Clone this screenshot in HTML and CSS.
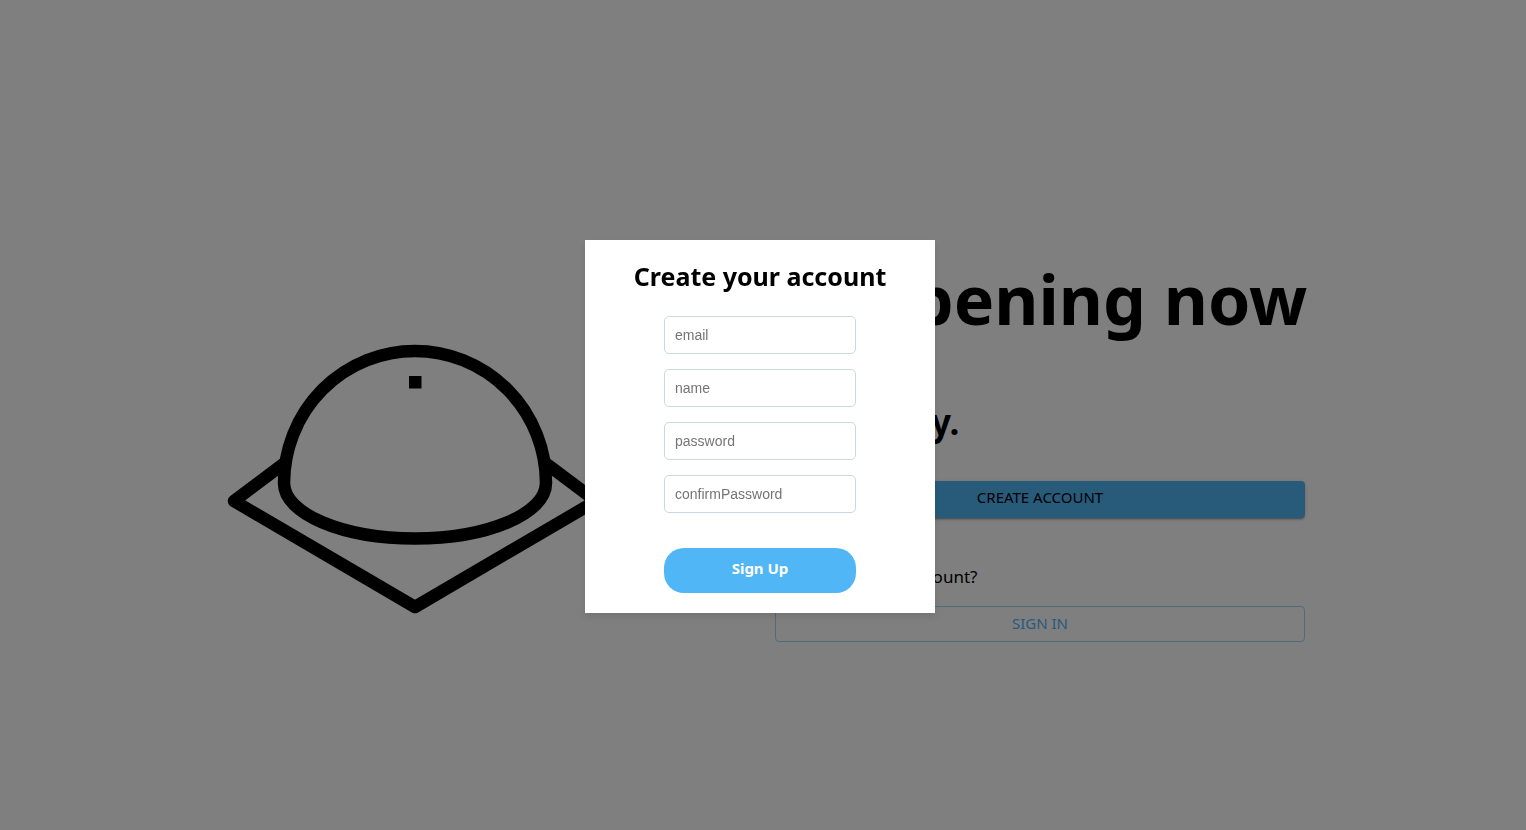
FILE: index.html
```
<!DOCTYPE html>
<html lang="en">
<head>
<meta charset="utf-8">
<title>Create your account</title>
<link rel="stylesheet" href="styles.css">
</head>
<body>
<main class="landing">
  <svg class="logo" viewBox="0 0 400 400" fill="none" stroke="#000" stroke-width="12.5" stroke-linejoin="round" aria-hidden="true">
    <path d="M71 214 L19 253 L200 359 L381 253 L329 214"/>
    <path d="M69 235 A131 132 0 0 1 331 235 C331 266 272 290.500 200 290.500 S69 266 69 235 Z"/>
    <path d="M194 128h12.500v12.500h-12.500z" fill="#000" stroke="none"/>
  </svg>
  <section class="intro">
    <h1 class="title">Happening now</h1>
    <h2 class="subtitle">Join today.</h2>
    <button class="button button-filled" type="button">CREATE ACCOUNT</button>
    <p class="question">Already have an account?</p>
    <button class="button button-outlined" type="button">SIGN IN</button>
  </section>
</main>
<div class="overlay">
  <form class="dialog" role="dialog" aria-labelledby="dialog-title">
    <h2 class="dialog-title" id="dialog-title">Create your account</h2>
    <div class="fields">
      <input class="field" type="email" placeholder="email" aria-label="email">
      <input class="field" type="text" placeholder="name" aria-label="name">
      <input class="field" type="password" placeholder="password" aria-label="password">
      <input class="field" type="password" placeholder="confirmPassword" aria-label="confirmPassword">
    </div>
    <button class="submit" type="submit">Sign Up</button>
  </form>
</div>
</body>
</html>
```
FILE: styles.css
```
* { box-sizing: border-box; }

body {
  margin: 0;
  background: #fff;
  color: #000;
  font-family: "Noto Sans", sans-serif;
}

h1, h2, p { margin: 0; }
button { font-family: inherit; cursor: pointer; }

.landing {
  display: flex;
  align-items: center;
  justify-content: center;
  gap: 160px;
  min-height: 100vh;
  padding: 65px 6px 0 0;
}

.logo { width: 400px; flex-shrink: 0; }

.intro {
  display: flex;
  flex-direction: column;
  width: 530px;
}

.title { font-size: 68px; line-height: 92px; white-space: nowrap; }
.subtitle { margin: 53px 0 35px; font-size: 35px; line-height: 48px; }
.question { margin: 47px 0 17px; font-size: 17px; line-height: 24px; }

.button {
  border: 0;
  border-radius: 4px;
  padding: 0 16px 2px;
  font-size: 15px;
  line-height: 32px;
}

.button-filled {
  padding-bottom: 5px;
  background: #50b6f5;
  box-shadow: 0 3px 1px -2px rgba(0, 0, 0, .2), 0 2px 2px rgba(0, 0, 0, .14), 0 1px 5px rgba(0, 0, 0, .12);
}

.button-outlined {
  border: 1px solid #a0d6f8;
  background: transparent;
  color: #50b6f5;
}

.overlay {
  position: fixed;
  inset: 0;
  display: flex;
  align-items: center;
  justify-content: center;
  padding: 22px 6px 0 0;
  background: rgba(0, 0, 0, .5);
}

.dialog {
  display: flex;
  flex-direction: column;
  align-items: center;
  width: 350px;
  padding: 20px;
  background: #fff;
  box-shadow: 0 4px 8px rgba(0, 0, 0, .1);
}

.dialog-title { margin-bottom: 24px; font-size: 25px; line-height: 32px; }

.fields {
  display: grid;
  gap: 15px;
  width: 192px;
  margin-bottom: 35px;
}

.field {
  width: 100%;
  height: 38px;
  border: 1px solid #c9d8e0;
  border-radius: 5px;
  padding: 0 10px;
  font-family: "Liberation Sans", sans-serif;
  font-size: 14px;
}

.field::placeholder { color: #757575; }

.submit {
  width: 192px;
  height: 45px;
  border: 0;
  border-radius: 20px;
  padding: 0 0 4px;
  background: #50b6f5;
  color: #fff;
  font-size: 15px;
  font-weight: 700;
}
```
